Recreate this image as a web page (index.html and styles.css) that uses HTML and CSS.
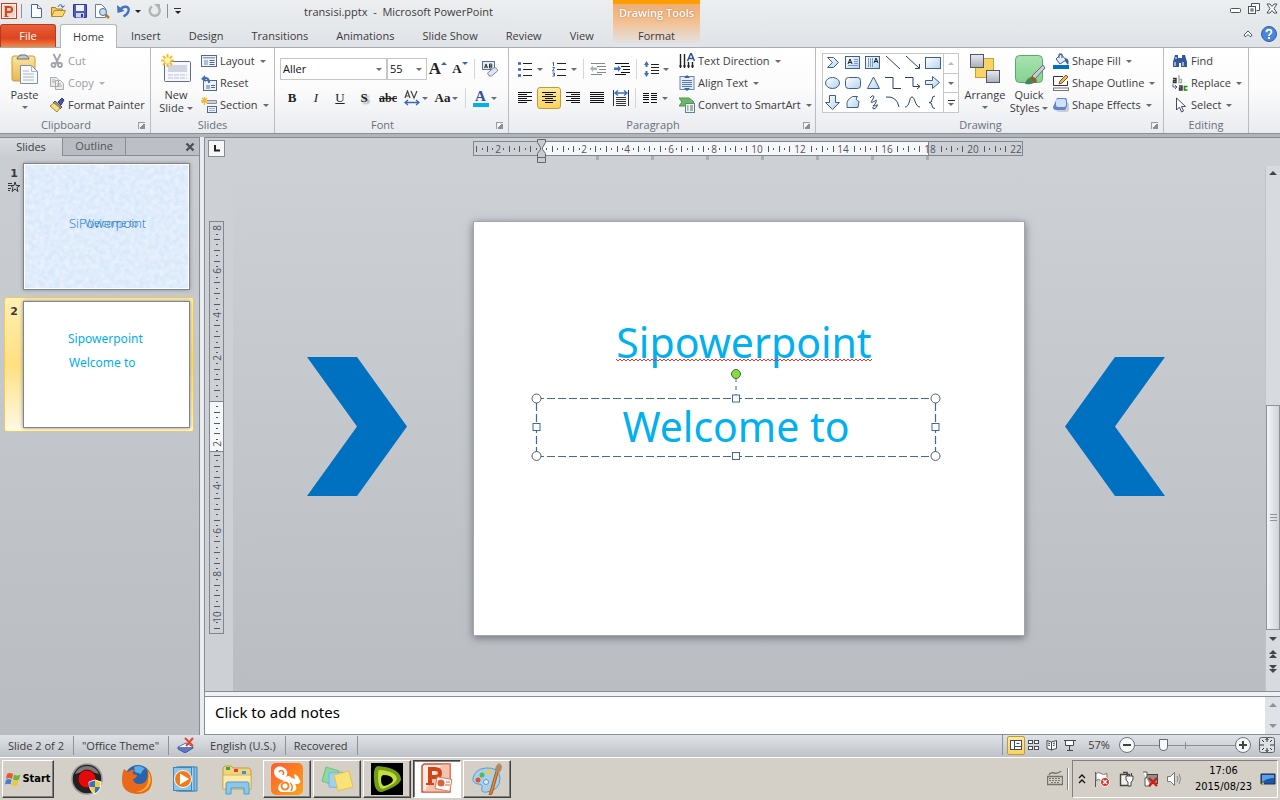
FILE: index.html
```html
<!DOCTYPE html>
<html lang="en">
  <head>
    <meta charset="UTF-8" />
    <meta name="viewport" content="width=device-width, initial-scale=1.0" />
    <title>transisi.pptx - Microsoft PowerPoint</title>
    <link rel="stylesheet" href="styles.css">
  </head>
  <body>
    <svg width="0" height="0" class="defs" aria-hidden="true">
      <defs>
        <linearGradient id="gBlue" x1="0" y1="0" x2="1" y2="1"><stop offset="0" stop-color="#fff" /><stop offset="1" stop-color="#b5d3ee" /></linearGradient>
        <linearGradient id="gGrey" x1="0" y1="0" x2="0" y2="1"><stop offset="0" stop-color="#e9ebef" /><stop offset="1" stop-color="#a9aeb8" /></linearGradient>
        <linearGradient id="gGold" x1="0" y1="0" x2="0" y2="1"><stop offset="0" stop-color="#fbe6a0" /><stop offset="1" stop-color="#e9b64e" /></linearGradient>
        <linearGradient id="gGreen" x1="0" y1="0" x2="0" y2="1"><stop offset="0" stop-color="#a9e3b0" /><stop offset="1" stop-color="#84d193" /></linearGradient>
        <linearGradient id="gOrange" x1="0" y1="0" x2="1" y2="1"><stop offset="0" stop-color="#ff5a2a" /><stop offset="1" stop-color="#ffa31a" /></linearGradient>
      </defs>
    </svg>

    <header class="header">
      <div class="header-left">
        <div class="title-row">
          <div class="qat">
            <svg class="app-icon" width="16" height="16" viewBox="0 0 16 16"><rect x="0.5" y="0.5" width="15" height="15" fill="#fdf3ee" stroke="#c4401c" /><rect x="2" y="2" width="12" height="12" fill="#f6d3c4" /><path d="M5 13V4h3.500a2.500 2.500 0 0 1 0 5H5" fill="none" stroke="#d14a1e" stroke-width="2.200" /><path d="M3.500 13.500h4M3.500 3.500h2" stroke="#d14a1e" /></svg>
            <span class="qat-sep"></span>
            <button aria-label="New"><svg width="16" height="16" viewBox="0 0 16 16"><path d="M3.500 1.500h6l4 4v9h-10z" fill="#fff" stroke="#4a6a96" /><path d="M9.500 1.500v4h4" fill="#dfe9f5" stroke="#4a6a96" /></svg></button>
            <button aria-label="Open"><svg width="16" height="16" viewBox="0 0 16 16"><path d="M1.500 13.500v-9h4l1 1.500h6v3" fill="#f3c963" stroke="#a97c22" /><path d="M1.500 13.500l3-6h11l-3 6z" fill="#fbd674" stroke="#b98a2a" /><path d="M8 4c1-3 4-3 5 0m-2-1l2 1.500 1.500-2" fill="none" stroke="#3d6bb5" /></svg></button>
            <button aria-label="Save"><svg width="16" height="16" viewBox="0 0 16 16"><path d="M1.500 1.500h13v13h-12l-1-1z" fill="#5159c0" stroke="#3338a0" /><rect x="4" y="2" width="8" height="6" fill="#eef2fb" /><rect x="4" y="10" width="8" height="4.500" fill="#cdd6e8" /><rect x="9" y="11" width="2" height="3" fill="#3338a0" /></svg></button>
            <button aria-label="Print Preview"><svg width="16" height="16" viewBox="0 0 16 16"><path d="M1.500 1.500h6l4 4v9h-10z" fill="#fff" stroke="#6a7d9a" /><circle cx="9" cy="9" r="3.500" fill="#bfe0f5" stroke="#4a6a96" /><path d="M11.500 11.500l3.500 3.500" stroke="#b9782c" stroke-width="2.500" /></svg></button>
            <button class="split" aria-label="Undo"><svg width="16" height="16" viewBox="0 0 16 16"><path d="M4 7c3-5 10-4 8.500 1-.5 2-2 4-5 5.500" fill="none" stroke="#4273c4" stroke-width="2.400" /><path d="M1 2l.5 8 7-2z" fill="#4273c4" /></svg><i class="caret dark"></i></button>
            <button aria-label="Repeat"><svg width="16" height="16" viewBox="0 0 16 16"><path d="M5 3.500a5 5 0 1 0 6.500 1" fill="none" stroke="#b0b3b8" stroke-width="2.400" /><path d="M7 1h6v6z" fill="#b0b3b8" /></svg></button>
            <span class="qat-sep"></span>
            <button class="customize" aria-label="Customize"><i class="bar"></i><i class="caret dark"></i></button>
          </div>
          <h1 class="doc-title">transisi.pptx&nbsp; -&nbsp; Microsoft PowerPoint</h1>
        </div>
        <nav class="tabs">
          <button class="tab file">File</button>
          <button class="tab active">Home</button>
          <button class="tab">Insert</button>
          <button class="tab">Design</button>
          <button class="tab">Transitions</button>
          <button class="tab">Animations</button>
          <button class="tab">Slide Show</button>
          <button class="tab">Review</button>
          <button class="tab">View</button>
        </nav>
      </div>
      <div class="context-tab">
        <span class="context-title">Drawing Tools</span>
        <button class="tab">Format</button>
      </div>
      <div class="header-right">
        <div class="win-controls">
          <button aria-label="Minimize"><svg width="12" height="12" viewBox="0 0 12 12"><rect x="0.5" y="5.500" width="10" height="4" rx="1" fill="#fff" stroke="#4d5260" /></svg></button>
          <button aria-label="Restore"><svg width="12" height="12" viewBox="0 0 12 12"><path d="M3.500 3.500v-3h8v7h-3" fill="#fff" stroke="#4d5260" /><rect x="0.500" y="3.500" width="7" height="7" fill="#fff" stroke="#4d5260" /><rect x="3" y="6" width="2" height="2" fill="none" stroke="#4d5260" /></svg></button>
          <button aria-label="Close"><svg width="12" height="12" viewBox="0 0 12 12"><path d="M1 1h3l2 2.500L8 1h3L8 5.500 11 10H8L6 7.500 4 10H1l3-4.500z" fill="#fff" stroke="#4d5260" /></svg></button>
        </div>
        <div class="help-row">
          <button aria-label="Minimize the Ribbon"><svg width="10" height="8" viewBox="0 0 10 8"><path d="M1 5l4-4 4 4-1 1.500H7L5 4.500 3 6.500H2z" fill="#fff" stroke="#4d5260" /></svg></button>
          <button aria-label="Help"><svg width="16" height="16" viewBox="0 0 16 16"><circle cx="8" cy="8" r="7.500" fill="#4a86d8" stroke="#2c5fae" /><path d="M5.500 6.200c0-3.400 5-3.200 5-.3 0 1.900-2.500 2-2.500 4" fill="none" stroke="#fff" stroke-width="1.800" /><rect x="7" y="11" width="2" height="2" fill="#fff" /></svg></button>
        </div>
      </div>
    </header>

    <section class="ribbon">
      <div class="group g-clipboard">
        <div class="group-body">
          <button class="big">
            <svg width="28" height="32" viewBox="0 0 28 32"><rect x="1" y="3" width="23" height="25" rx="2" fill="url(#gGold)" stroke="#cf9a3c" /><path d="M6 6c0-3 3-2 3-4h6c0 2 3 1 3 4z" fill="#c3c7ce" stroke="#696e78" /><path d="M9.500 12.500h11l6 6v12h-17z" fill="#f7f9fc" stroke="#7c8da8" /><path d="M20.500 12.500v6h6M12 18h6M12 21h11M12 24h11M12 27h11" fill="none" stroke="#a9b6ca" /></svg>
            <span>Paste</span><i class="caret"></i>
          </button>
          <div class="small-col">
            <button class="small off"><svg width="16" height="16" viewBox="0 0 16 16"><path d="M4.500 1l5 10M11.500 1l-5 10" stroke="#9fa3a9" stroke-width="1.800" fill="none" /><circle cx="4.500" cy="12" r="2" fill="none" stroke="#9fa3a9" stroke-width="1.800" /><circle cx="11" cy="12" r="2" fill="none" stroke="#9fa3a9" stroke-width="1.800" /></svg>Cut</button>
            <button class="small off"><svg width="16" height="16" viewBox="0 0 16 16"><path d="M1.500 2.500h6l2 2v7h-8zM6.500 5.500h5l3 3v6h-8z" fill="#eceded" stroke="#a9acb0" /><path d="M8 9h4M8 11h5M3 5h3M3 7h3" stroke="#a9acb0" /></svg>Copy<i class="caret"></i></button>
            <button class="small"><svg width="16" height="16" viewBox="0 0 16 16"><path d="M9 5l4-4 2 2-3 5z" fill="#4a55a8" stroke="#30397e" /><path d="M6 4l7 6-2 2-7-6z" fill="#8b8f98" stroke="#53565e" /><path d="M5 6l6 5-3 4-7-6z" fill="#f6dd85" stroke="#a88b34" /></svg>Format Painter</button>
          </div>
        </div>
        <div class="group-name">Clipboard<i class="launcher"></i></div>
      </div>

      <div class="group g-slides">
        <div class="group-body">
          <button class="big">
            <svg width="32" height="32" viewBox="0 0 32 32"><rect x="4.500" y="8.500" width="26" height="20" rx="1" fill="#f6f8fc" stroke="#5d6f8e" /><rect x="8" y="12" width="19" height="7" fill="#cfd5e2" /><path d="M8 22h19M8 25h19" stroke="#b9c0d0" stroke-dasharray="5 1" /><path d="M7.500 1v13M1 7.500h13M3 3l9 9M12 3l-9 9" stroke="#f4bd2a" stroke-width="2" /><circle cx="7.500" cy="7.500" r="3" fill="#fff3ae" /></svg>
            <span>New<br>Slide <i class="caret"></i></span>
          </button>
          <div class="small-col">
            <button class="small"><svg width="16" height="16" viewBox="0 0 16 16"><rect x="0.5" y="2.500" width="15" height="11" fill="#eef2fa" stroke="#56688a" /><rect x="2" y="4" width="12" height="1.500" fill="#8fa3c7" /><rect x="3" y="7" width="4" height="5" fill="#b2bfd8" /><path d="M8.500 7.500h5M8.500 9.500h5M8.500 11.500h5" stroke="#56688a" /></svg>Layout<i class="caret"></i></button>
            <button class="small"><svg width="16" height="16" viewBox="0 0 16 16"><rect x="2.500" y="5.500" width="13" height="10" fill="#eef2fa" stroke="#56688a" /><rect x="5" y="10" width="4" height="4" fill="#9fb0d0" /><path d="M10 10.500h4M10 12.500h4" stroke="#56688a" /><path d="M2 4c3-2 6-1 6 4" fill="none" stroke="#3c6fc4" stroke-width="2" /><path d="M0 4l4-4 1 7z" fill="#3c6fc4" /></svg>Reset</button>
            <button class="small"><svg width="16" height="16" viewBox="0 0 16 16"><path d="M3.500 0v8M0 4h8M1 1l5 5M6 1L1 6" stroke="#f0b92c" stroke-width="1.300" /><path d="M6 3.500h9.500v3H6" fill="#cdd1d8" stroke="#8b919c" /><rect x="6.500" y="9.500" width="9" height="6" fill="#eef2fa" stroke="#56688a" /><path d="M8 11.500h6M8 13.500h6" stroke="#9fb0d0" /></svg>Section<i class="caret"></i></button>
          </div>
        </div>
        <div class="group-name">Slides</div>
      </div>

      <div class="group g-font">
        <div class="rows">
          <div class="row">
            <label class="combo font-name"><select aria-label="Font"><option>Aller</option></select><i class="caret"></i></label>
            <label class="combo font-size"><select aria-label="Font Size"><option>55</option></select><i class="caret"></i></label>
            <button class="tool fit-font" aria-label="Grow Font"><b class="serif lg">A</b><i class="tri up"></i></button>
            <button class="tool fit-font" aria-label="Shrink Font"><b class="serif sm">A</b><i class="tri down"></i></button>
            <span class="sep"></span>
            <button class="tool" aria-label="Clear Formatting"><svg width="18" height="18" viewBox="0 0 18 18"><rect x="1.500" y="1.500" width="12" height="8" fill="#e5ebf6" stroke="#5a6f98" /><path d="M3.500 8l1.500-4 1.500 4M4 7h2M8.500 4v4h1.500a1 1 0 0 0 0-2h-1.500 1.500a1 1 0 0 0 0-2z" fill="none" stroke="#333" /><path d="M6.500 13l6-5q4-1 4 3l-6 5q-3 1-4-3z" fill="#dfe5f2" stroke="#7187b2" /></svg></button>
          </div>
          <div class="row">
            <button class="tool serif"><b>B</b></button>
            <button class="tool serif"><em>I</em></button>
            <button class="tool serif"><u>U</u></button>
            <button class="tool serif shadow"><b>S</b></button>
            <button class="tool serif strike"><s>abc</s></button>
            <button class="tool split spacing" aria-label="Character Spacing"><svg width="16" height="16" viewBox="0 0 16 16"><path d="M1 8l2.500-7L6 8M2 6h3M7 1l3 7 3-7" fill="none" stroke="#444" stroke-width="1.200" /><path d="M1 12.500h14M4 10l-3 2.500L4 15M12 10l3 2.500-3 2.500" fill="none" stroke="#3a68b8" stroke-width="1.300" /></svg><i class="caret"></i></button>
            <button class="tool split serif case"><b>Aa</b><i class="caret"></i></button>
            <span class="sep"></span>
            <button class="tool split serif color"><b>A</b><i class="caret"></i></button>
          </div>
        </div>
        <div class="group-name">Font<i class="launcher"></i></div>
      </div>

      <div class="group g-paragraph">
        <div class="group-body">
          <div class="rows">
            <div class="row">
              <button class="tool split" aria-label="Bullets"><svg width="16" height="16" viewBox="0 0 16 16"><path d="M6 2.500h9M6 8.500h9M6 14.500h9" stroke="#222" /><path d="M1 2.500h3M1 8.500h3M1 14.500h3" stroke="#3a62b0" stroke-width="2.600" /></svg><i class="caret"></i></button>
              <button class="tool split" aria-label="Numbering"><svg width="16" height="16" viewBox="0 0 16 16"><path d="M6 2.500h9M6 8.500h9M6 14.500h9" stroke="#222" /><path d="M2.500 1v4M1.500 2h1M1.500 6.500h2L1.500 10h2M1.500 12h2v1.500h-1 1V15h-2" fill="none" stroke="#3a62b0" /></svg><i class="caret"></i></button>
              <span class="sep"></span>
              <button class="tool" aria-label="Decrease List Level"><svg width="16" height="16" viewBox="0 0 16 16"><path d="M1 2.500h14M7 5.500h9M9 8.500h7M7 11.500h9M1 13.500h11" stroke="#888" /><path d="M0 7.500l3-3v2h4v2.500H3v2z" fill="#a8b0bb" /></svg></button>
              <button class="tool" aria-label="Increase List Level"><svg width="16" height="16" viewBox="0 0 16 16"><path d="M1 2.500h14M7 5.500h9M9 8.500h7M7 11.500h9M1 13.500h11" stroke="#111" /><path d="M7 7.500L4 4.500v2H0v2.500h4v2z" fill="#3b6fc6" /></svg></button>
              <span class="sep"></span>
              <button class="tool split" aria-label="Line Spacing"><svg width="16" height="16" viewBox="0 0 16 16"><path d="M8 3.500h8M8 6.500h8M8 9.500h8M8 12.500h8" stroke="#222" /><path d="M3.500 0L6 4H4.500v2h-2V4H1zM3.500 16L6 12H4.500v-2h-2v2H1z" fill="#3a6ec4" /></svg><i class="caret"></i></button>
            </div>
            <div class="row">
              <button class="tool" aria-label="Align Left"><svg width="16" height="16" viewBox="0 0 16 16"><path d="M1 2.500h14M1 4.500h9M1 6.500h14M1 8.500h9M1 10.500h14M1 12.500h9" stroke="#111" /></svg></button>
              <button class="tool on" aria-label="Center"><svg width="16" height="16" viewBox="0 0 16 16"><path d="M1 2.500h14M4 4.500h8M1 6.500h14M4 8.500h8M1 10.500h14M4 12.500h8" stroke="#111" /></svg></button>
              <button class="tool" aria-label="Align Right"><svg width="16" height="16" viewBox="0 0 16 16"><path d="M1 2.500h14M6 4.500h9M1 6.500h14M6 8.500h9M1 10.500h14M6 12.500h9" stroke="#111" /></svg></button>
              <button class="tool" aria-label="Justify"><svg width="16" height="16" viewBox="0 0 16 16"><path d="M1 2.500h14M1 4.500h14M1 6.500h14M1 8.500h14M1 10.500h14M1 12.500h14" stroke="#111" /></svg></button>
              <button class="tool" aria-label="Distribute"><svg width="16" height="16" viewBox="0 0 16 16"><path d="M.5 0v16M15.500 0v16M3 7.500h10M3 9.500h10M3 11.500h10M3 13.500h10M3 15.500h10" stroke="#333" /><path d="M2 3h12M5 .5L2 3l3 2.500M11 .5L14 3l-3 2.500" fill="none" stroke="#3a6ec4" stroke-width="1.400" /></svg></button>
              <span class="sep"></span>
              <button class="tool split" aria-label="Columns"><svg width="16" height="16" viewBox="0 0 16 16"><path d="M1 3.500h6M9 3.500h6M1 5.500h6M9 5.500h6M1 7.500h6M9 7.500h6M1 9.500h6M9 9.500h6M1 12.500h6M9 12.500h6" stroke="#111" /></svg><i class="caret"></i></button>
            </div>
          </div>
          <div class="small-col">
            <button class="small"><svg width="16" height="16" viewBox="0 0 16 16"><path d="M1.500 1v14M5.500 1v14M9.500 9v6M13.500 9v6" stroke="#222" stroke-width="1.400" /><path d="M0 13h3M4 13h3M8 13h3M12 13h3" stroke="#222" /><path d="M8.500 8L12 0l3.500 8M9.500 5.500h5" fill="none" stroke="#33508f" stroke-width="1.500" /></svg>Text Direction<i class="caret"></i></button>
            <button class="small"><svg width="16" height="16" viewBox="0 0 16 16"><rect x="1" y="1.500" width="14" height="13" fill="#e8effa" stroke="#6f84ae" /><path d="M3 5.500h10M3 7.500h10M3 9.500h10M3 11.500h10" stroke="#5377b5" /><path d="M8 0l3 3H5zM8 16l3-3H5z" fill="#2f62bd" /></svg>Align Text<i class="caret"></i></button>
            <button class="small"><svg width="16" height="16" viewBox="0 0 16 16"><path d="M0 1h10l5 4-3 4H0l3-4z" fill="#6fb668" stroke="#4a9648" /><rect x="6.500" y="6.500" width="9" height="9" fill="#eef4f6" stroke="#64809a" /><path d="M8 9h1.500M8 11h1.500M8 13h1.500M11 9h3M11 11h3M11 13h3" stroke="#4f7a5c" /></svg>Convert to SmartArt<i class="caret"></i></button>
          </div>
        </div>
        <div class="group-name">Paragraph<i class="launcher"></i></div>
      </div>

      <div class="group g-drawing">
        <div class="group-body">
          <div class="gallery">
            <svg width="120" height="58" viewBox="0 1 120 58" fill="none" stroke="#3f5e8c">
              <path d="M4.500 4.500h6l5 5-5 5h-6l5-5z" fill="url(#gBlue)" />
              <rect x="22.500" y="3.500" width="14" height="12" fill="url(#gBlue)" /><path d="M25 11l2-5 2 5M25.500 9.500h3" stroke="#222" /><path d="M31 6.500h4M31 8.500h4M31 10.500h4M25 12.500h10" stroke="#7d9cc8" />
              <rect x="42.500" y="3.500" width="14" height="12" fill="url(#gBlue)" /><path d="M45.500 5v9M47.500 5v9M49.500 5v9" stroke="#7d9cc8" /><path d="M51 10l2-5 2 5M51.500 8.500h3" stroke="#222" />
              <path d="M63 3l14 13" stroke="#27416f" />
              <path d="M83 3l13 12M96.500 11v4.500H92" stroke="#27416f" />
              <rect x="102.500" y="4.500" width="15" height="11" fill="url(#gBlue)" />
              <ellipse cx="9.500" cy="30" rx="7" ry="5.500" fill="url(#gBlue)" />
              <rect x="22.500" y="24.500" width="15" height="11" rx="3" fill="url(#gBlue)" />
              <path d="M50.500 24l6 11.500h-12z" fill="url(#gBlue)" />
              <path d="M62 24.500h8v11h8M82 24.500h8v9h7M94 31l3 2.500-3 2.500" stroke="#27416f" />
              <path d="M102.500 27.500h7v-4l7 6-7 6v-4h-7z" fill="url(#gBlue)" />
              <path d="M6.500 42.500h6v7h4l-7 7-7-7h4z" fill="url(#gBlue)" />
              <path d="M25.500 46.500l4-3h5q-3 3 1.500 5l-1 6h-11v-5z" fill="url(#gBlue)" />
              <path d="M47 45c3-4 5-2 3 1s-3 4 0 3 4-4 3 0-5 4-2 4 4-3 3 0-5 4-4 1" stroke="#27416f" />
              <path d="M63 44q11-1 13 10" stroke="#27416f" />
              <path d="M82 54c5 0 4-10 7-10s3 10 8 10" stroke="#27416f" />
              <path d="M112 43q-3 0-3 3.500T106 49.500q3 0 3 3t3 3" stroke="#27416f" />
            </svg>
            <div class="gallery-nav">
              <button class="off" aria-label="Row up"><i class="caret up"></i></button>
              <button aria-label="Row down"><i class="caret"></i></button>
              <button aria-label="More"><i class="bar"></i><i class="caret"></i></button>
            </div>
          </div>
          <button class="big">
            <svg width="32" height="32" viewBox="0 0 32 32"><rect x="6.500" y="5.500" width="18" height="19" fill="#f7d465" stroke="#c9a136" /><rect x="1.500" y="1.500" width="13" height="13" fill="url(#gGrey)" stroke="#4f5665" /><rect x="17.500" y="17.500" width="13" height="12" fill="url(#gGrey)" stroke="#4f5665" /></svg>
            <span>Arrange</span><i class="caret"></i>
          </button>
          <button class="big">
            <svg width="32" height="32" viewBox="0 0 32 32"><rect x="2.500" y="2.500" width="27" height="27" rx="4" fill="url(#gGreen)" stroke="#57ab66" /><path d="M30 12l2 3-10 11-3-3z" fill="#c9ccd1" stroke="#666b74" /><path d="M12 31q2-8 9-7l3 3q-2 5-12 4z" fill="#47865a" /><path d="M18 24l5 5" stroke="#9b5a2a" stroke-width="3" /></svg>
            <span>Quick<br>Styles <i class="caret"></i></span>
          </button>
          <div class="small-col">
            <button class="small"><svg width="16" height="16" viewBox="0 0 16 16"><path d="M3 6l5-5 5 6-6 4z" fill="#e4ebf5" stroke="#3f5e8c" /><path d="M12 5q5 1 3 7l-3-4z" fill="#2f62a8" /><path d="M6 5V1h3v4" fill="none" stroke="#3f5e8c" /><rect y="12" width="16" height="4" fill="#0070c0" /></svg>Shape Fill<i class="caret"></i></button>
            <button class="small"><svg width="16" height="16" viewBox="0 0 16 16"><path d="M10 1.500H.5v9h14V6" fill="#fff" stroke="#333" /><path d="M6 9l1-3 6-6 2 2-6 6z" fill="#efb75c" stroke="#85551f" /><rect x="0.500" y="13" width="15" height="2.500" fill="#fff" stroke="#777" /></svg>Shape Outline<i class="caret"></i></button>
            <button class="small"><svg width="16" height="16" viewBox="0 0 16 16"><rect x="3" y="5" width="13" height="10" rx="3" fill="#c8ccd3" /><path d="M4 1h8q2 0 2 2v6l-2 4H3q-3 0-3-3z" fill="#5f86c9" /><rect x="3" y="2" width="10" height="8" rx="2" fill="#cfe0f7" /></svg>Shape Effects<i class="caret"></i></button>
          </div>
        </div>
        <div class="group-name">Drawing<i class="launcher"></i></div>
      </div>

      <div class="group g-editing">
        <div class="group-body">
          <div class="small-col">
            <button class="small"><svg width="16" height="16" viewBox="0 0 16 16"><path d="M3 2h3v3h4V2h3l2 7v5H9v-4H7v4H1V9z" fill="#34569a" /><path d="M3 9v4M11 9v4M4 4v2" stroke="#b9cdf0" stroke-width="1.500" /></svg>Find</button>
            <button class="small"><svg width="16" height="16" viewBox="0 0 16 16"><path d="M1 3.500h3v4H1.500v-2H4" fill="none" stroke="#333" stroke-width="1.400" /><path d="M7 0v7.500h2.500v-3H7" fill="none" stroke="#aaa" stroke-width="1.400" /><path d="M1 9v3h3M3 10l2 2-2 2" fill="none" stroke="#3a62b0" /><path d="M7 11h3v4H7.500v-2H10" fill="none" stroke="#333" stroke-width="1.400" /><path d="M15.500 11.500h-3v3.500h3" fill="none" stroke="#1c8f1c" stroke-width="1.700" /></svg>Replace<i class="caret"></i></button>
            <button class="small"><svg width="16" height="16" viewBox="0 0 16 16"><path d="M4.500 1v12l3-3 2 5 2-1-2-4.500h4z" fill="#fff" stroke="#3f4d6b" /></svg>Select<i class="caret"></i></button>
          </div>
        </div>
        <div class="group-name">Editing</div>
      </div>
    </section>

    <main class="workspace">
      <aside class="panel">
        <div class="panel-tabs">
          <button class="panel-tab active">Slides</button>
          <button class="panel-tab">Outline</button>
          <button class="panel-close" aria-label="Close"><svg width="10" height="10" viewBox="0 0 10 10"><path d="M1.500 1.500l7 7M8.500 1.500l-7 7" stroke="#4c5057" stroke-width="2.400" /></svg></button>
        </div>
        <div class="slide-item">
          <div class="slide-no">1
            <svg width="12" height="12" viewBox="0 0 12 12"><path d="M7 1l1.200 3.500H12L9 6.500l1 4-3-2.500-3 2.500 1-4-2.500-2H6z" fill="none" stroke="#333" /><path d="M0 2.500h4M0 4.500h2M0 7.500h3M0 9.500h2" stroke="#333" /></svg>
          </div>
          <div class="thumb paper">
            <svg class="texture" width="100%" height="100%"><filter id="noise"><feTurbulence type="fractalNoise" baseFrequency="0.2" numOctaves="3" seed="4" /><feColorMatrix values="0 0 0 0 .92  0 0 0 0 .93  0 0 0 0 .99  0 1.200 0 0 -.3" /></filter><rect width="100%" height="100%" filter="url(#noise)" /></svg>
            <span class="thumb-title">SiPowerpoint</span>
            <span class="thumb-under">Welcome to</span>
          </div>
        </div>
        <div class="slide-item selected">
          <div class="slide-no">2</div>
          <div class="thumb">
            <span class="line1">Sipowerpoint</span>
            <span class="line2">Welcome to</span>
          </div>
        </div>
      </aside>

      <div class="editor">
        <div class="canvas">
          <div class="corner"><button aria-label="Tab stop"><svg width="9" height="9" viewBox="0 0 9 9"><path d="M3 1v5.500h5" fill="none" stroke="#222" stroke-width="2" /></svg></button></div>
          <div class="ruler-h"><svg id="rulerH" width="552" height="24" viewBox="0 0 552 24"></svg></div>
          <div class="ruler-v"><svg id="rulerV" width="15" height="415" viewBox="0 0 15 415"></svg></div>
          <div class="stage">
            <div class="slide">
              <svg class="arrow arrow-left" width="100" height="139" viewBox="0 0 100 139"><path d="M0 0h50l50 69.500L50 139H0l50-69.500z" fill="#0070c0" /></svg>
              <svg class="arrow arrow-right" width="100" height="139" viewBox="0 0 100 139"><path d="M100 0H50L0 69.500 50 139h50L50 69.500z" fill="#0070c0" /></svg>
              <div class="text-box first"><span class="misspelt">Sipowerpoint</span></div>
              <div class="text-box second">Welcome to
                <svg class="handles" width="412" height="94" viewBox="-6 -30 412 94">
                  <path d="M.5 5V58M399.500 5V58M0 .5h400M0 58.500h400" stroke="#41699c" stroke-width="1.200" stroke-dasharray="8 3" fill="none" />
                  <path d="M200-20V0" stroke="#41699c" stroke-dasharray="4 4" />
                  <circle cx="200" cy="-24" r="4.500" fill="#83e030" stroke="#555b66" />
                  <g fill="#fff" stroke="#555b6b"><circle cx=".5" cy=".5" r="4.500" /><circle cx="399.500" cy=".5" r="4.500" /><circle cx=".5" cy="58" r="4.500" /><circle cx="399.500" cy="58" r="4.500" /></g>
                  <g fill="#fff" stroke="#41699c"><rect x="196.500" y="-3" width="7" height="7" /><rect x="196.500" y="54.500" width="7" height="7" /><rect x="-3" y="25.500" width="7" height="7" /><rect x="396" y="25.500" width="7" height="7" /></g>
                </svg>
              </div>
            </div>
          </div>
          <div class="scrollbar">
            <button aria-label="Scroll up"><i class="arr up"></i></button>
            <div class="track"><div class="scroll-thumb"></div></div>
            <button aria-label="Scroll down"><i class="arr"></i></button>
            <button class="page" aria-label="Previous Slide"><i class="arr up"></i><i class="arr up"></i></button>
            <button class="page" aria-label="Next Slide"><i class="arr"></i><i class="arr"></i></button>
          </div>
        </div>
        <div class="notes">
          <p>Click to add notes</p>
          <div class="notes-scroll"><i class="arr up"></i><i class="arr"></i></div>
        </div>
      </div>
    </main>

    <footer class="status">
      <span class="cell">Slide 2 of 2</span>
      <span class="cell">"Office Theme"</span>
      <span class="cell spell"><svg width="18" height="16" viewBox="0 0 18 16"><path d="M1 10l8-4 7 4-8 5z" fill="#fff" stroke="#5069a8" /><path d="M1 10v2l7 4 8-5v-1" fill="#5f78c0" stroke="#4059a0" /><path d="M8 1l8 8M16 1l-7 8" stroke="#e8442c" stroke-width="2" /></svg>English (U.S.)</span>
      <span class="cell">Recovered</span>
      <div class="status-right">
        <button class="view on" aria-label="Normal"><svg width="12" height="11" viewBox="0 0 12 11"><rect x="0.500" y="0.500" width="11" height="9" fill="#fff" stroke="#444a55" /><path d="M4.500 0v10M5 6.500h7M6.500 3.500h3" stroke="#444a55" /></svg></button>
        <button class="view" aria-label="Slide Sorter"><svg width="12" height="11" viewBox="0 0 12 11" fill="#fff" stroke="#444a55"><rect x="0.500" y="0.500" width="4" height="3" /><rect x="6.500" y="0.500" width="4" height="3" /><rect x="0.500" y="6.500" width="4" height="3" /><rect x="6.500" y="6.500" width="4" height="3" /></svg></button>
        <button class="view" aria-label="Reading View"><svg width="12" height="11" viewBox="0 0 12 11" fill="#fff" stroke="#444a55"><path d="M5.500 2L1 .5v8L5.500 10 10.500 8.500v-8zV10M2 3l2 .5M2 5l2 .5M7 3.500L9 3M7 5.500L9 5" /></svg></button>
        <button class="view" aria-label="Slide Show"><svg width="12" height="11" viewBox="0 0 12 11" fill="#fff" stroke="#444a55"><path d="M0 .5h12M1.500 1v4.500h8V1M5.500 6v4M3 10.500h6" /></svg></button>
        <span class="percent">57%</span>
        <button class="round" aria-label="Zoom out"><svg width="16" height="16" viewBox="0 0 16 16"><circle cx="8" cy="8" r="7.500" fill="#f7f8fa" stroke="#6d727b" /><path d="M4 8h8" stroke="#444" stroke-width="2" /></svg></button>
        <input type="range" min="0" max="100" value="26" aria-label="Zoom" />
        <button class="round" aria-label="Zoom in"><svg width="16" height="16" viewBox="0 0 16 16"><circle cx="8" cy="8" r="7.500" fill="#f7f8fa" stroke="#6d727b" /><path d="M4 8h8M8 4v8" stroke="#444" stroke-width="2" /></svg></button>
        <button class="fit" aria-label="Fit slide"><svg width="16" height="16" viewBox="0 0 16 16"><rect x="0.500" y="0.500" width="15" height="15" rx="2" fill="#dfe1e5" stroke="#5d626c" /><path d="M8 1v4M8 11v4M1 8h4M11 8h4M6.500 3L8 1.500 9.500 3M6.500 13L8 14.500 9.500 13M3 3l2 2M13 3l-2 2M3 13l2-2M13 13l-2-2" fill="none" stroke="#333" /></svg></button>
      </div>
    </footer>

    <div class="taskbar">
      <button class="start"><svg width="16" height="16" viewBox="0 0 16 16"><path d="M2 3q3-2 6 0L7 8Q4 6 1 8z" fill="#e8572b" /><path d="M9 3.500q3 2 6.500 0L14 8.500q-3 2-6 0z" fill="#6fb53a" /><path d="M1 9q3-2 5.500 0L5.500 13.500Q3 12 0 13.500z" fill="#3b7fd6" /><path d="M7.500 9.500q3 2 6 0l-1 5q-3 1.500-6-.5z" fill="#f7c52e" /></svg>Start</button>
      <button class="task" aria-label="Recorder"><svg width="32" height="32" viewBox="0 0 32 32"><circle cx="16" cy="16" r="15" fill="#222" stroke="#999" stroke-width="1.500" /><path d="M4 11a13 13 0 0 1 24 0q-12-5-24 0z" fill="#777" /><circle cx="16" cy="16" r="9" fill="#e20a0a" stroke="#600" /><path d="M18 19l6-2 6 2q0 9-6 12-6-3-6-12z" fill="#f6ce34" stroke="#fff" /><path d="M24 17.500V24h-5.500q-.5-2 0-5zM24 24h5q-1 4-5 6z" fill="#2c73d2" /></svg></button>
      <button class="task" aria-label="Firefox"><svg width="32" height="32" viewBox="0 0 32 32"><circle cx="17" cy="15" r="13" fill="#2b62ad" /><path d="M13 4q7-3 11 2-3 1-4 5l-6-2z" fill="#58aee6" /><path d="M3 6l4 3q3-3 7-2-3 2-2 4l4 1q0 3-4 4 1 5 6 5 6 0 8-5 2-6-1-11 6 5 6 12 0 14-15 14Q1 30 1 17 1 10 3 6z" fill="#e8681c" /><path d="M27 8q5 8 1 15-5 7-13 6 10-2 12-10 1-5 0-11z" fill="#fbb829" /></svg></button>
      <button class="task" aria-label="Media Player"><svg width="32" height="32" viewBox="0 0 32 32"><path d="M8 4h18v24H8z" fill="#86bde2" stroke="#3f86b8" /><path d="M5 4h18v24H5z" fill="#a6d2ee" stroke="#3f86b8" /><rect x="2.500" y="4.500" width="18" height="23" fill="#8ec6e8" stroke="#3f86b8" /><circle cx="12" cy="16" r="8.500" fill="#f07a1c" stroke="#fff" /><path d="M9 10.500l9 5.500-9 5.500z" fill="#fff" /></svg></button>
      <button class="task" aria-label="Explorer"><svg width="32" height="32" viewBox="0 0 32 32"><path d="M2 26V5l2-2h6l2 2h16l2 2v19z" fill="#f0d37c" stroke="#c39c3c" /><rect x="5" y="4" width="4" height="3" fill="#2ea84a" /><rect x="13" y="6" width="4" height="3" fill="#d9422c" /><rect x="21" y="8" width="4" height="3" fill="#3b8fd8" /><path d="M2 12h28v14H2z" fill="#fae9a8" stroke="#d6b55c" /><path d="M5 31V21q0-2 2-2h19q2 0 2 2v10h-5v-6H10v6z" fill="#8cc7ea" stroke="#4e9cc9" /></svg></button>
      <button class="task open" aria-label="UC Browser"><svg width="32" height="32" viewBox="0 0 32 32"><rect width="32" height="32" rx="5" fill="url(#gOrange)" /><path d="M13 18C8 16 3 14 3 9c0-5 6-7 10-4 4 2 4 6 2 9 2-2 4-1 6 1l3 1-1-5c3 1 5 3 5 5 2 2 2 4-1 5h-3c3 4 1 8-4 8H10c-5-3-3-8 3-11z" fill="#fff" /><path d="M8 9c2-3 6-1 4 3" fill="none" stroke="#ff6a28" stroke-width="1.500" /><circle cx="14" cy="23" r="3.500" fill="none" stroke="#ff8020" stroke-width="2" /><path d="M19 20q4 3 1 8" fill="none" stroke="#ff8020" stroke-width="1.500" /></svg></button>
      <button class="task open" aria-label="Sticky Notes"><svg width="32" height="32" viewBox="0 0 32 32"><path d="M5 4l13 4-4 15L1 18z" fill="#8fd9a0" stroke="#6fc083" /><path d="M8 10l14-1 1 16-15-1z" fill="#a3cff2" stroke="#7ab3e0" /><path d="M13 12l15-4 4 16-15 4z" fill="#fae27a" stroke="#e2c14a" /></svg></button>
      <button class="task open" aria-label="Etisalat"><svg width="32" height="32" viewBox="0 0 32 32"><rect width="32" height="32" fill="#000" /><path d="M7 3q22 2 23 13 0 6-19 13Q2 30 3 10q0-6 4-7z" fill="#719e19" /><path d="M8 7q17 1 18 9-1 5-14 10-5 0-5-12 0-6 1-7z" fill="#c5dc3a" /><path d="M12 12q9 0 10 5-1 4-9 6-3-1-3-7 0-3 2-4z" fill="#000" /></svg></button>
      <button class="task pressed" aria-label="PowerPoint"><svg width="32" height="32" viewBox="0 0 32 32"><path d="M3 1h26v28H1V3z" fill="#fbeae3" stroke="#d35230" stroke-width="1.500" /><path d="M21 1h8v28H3z" fill="#f0a88c" opacity=".6" /><path d="M9 21V6h5q5 0 5 4t-5 4H9" fill="none" stroke="#cf4517" stroke-width="4" /><path d="M5 21h8" stroke="#cf4517" stroke-width="2" /><rect x="15" y="15" width="15" height="12" rx="1" fill="#fff" stroke="#e07a58" transform="rotate(10 22 21)" /><circle cx="20" cy="20" r="3.500" fill="#e0603c" /><path d="M25 19h4M24 22h5" stroke="#e0603c" /></svg></button>
      <button class="task open" aria-label="Paint"><svg width="32" height="32" viewBox="0 0 32 32"><path d="M15 5Q28 4 29 15q0 12-13 14-7 1-5-4 1-4-4-4-6-1-5-6Q4 6 15 5z" fill="#a8d0ec" stroke="#5d9bc7" /><circle cx="11" cy="12" r="2.500" fill="#58b848" /><circle cx="18" cy="9" r="2.500" fill="#f3cb3a" /><circle cx="7" cy="17" r="2.500" fill="#e05038" /><circle cx="15" cy="19" r="2.500" fill="#dbeefa" stroke="#5d9bc7" /><path d="M25 8l2 2-6 21-3 1z" fill="#e08a34" stroke="#a85d1c" /><path d="M24 9q-1-5 4-9 6 3 0 10z" fill="#b08a62" /></svg></button>
      <div class="tray">
        <svg class="keyboard" width="16" height="16" viewBox="0 0 16 16"><path d="M2 4q1-3 5-2t7-2M.5 5.500h15v8H.5z" fill="none" stroke="#76736c" stroke-width="1.300" /><path d="M2 7.500h12M2 9.500h12M4 11.500h8" stroke="#76736c" stroke-dasharray="2 1" /></svg>
        <span class="tray-sep"></span>
        <div class="tray-box">
          <button class="chevrons" aria-label="Show hidden icons"><svg width="8" height="10" viewBox="0 0 8 10"><path d="M1 4l3-3 3 3M1 9l3-3 3 3" fill="none" stroke="#111" stroke-width="1.300" /></svg></button>
          <svg width="16" height="16" viewBox="0 0 16 16"><path d="M1.500 1v15" stroke="#555" /><path d="M2 2.500q3-2 5 0t6 0v7q-3 2-6 0t-5 0z" fill="#fff" stroke="#777" /><circle cx="11" cy="11" r="4.500" fill="#dd2c20" stroke="#fff" /><path d="M9 9l4 4M13 9l-4 4" stroke="#fff" stroke-width="1.500" /></svg>
          <svg width="16" height="16" viewBox="0 0 16 16"><path d="M2.500 3.500h9v11h-9zM5 1.500h4v2" fill="#f2f1ee" stroke="#444" stroke-width="1.400" /><path d="M8 5h7v3q0 2-2 3v4h-3v-4q-2-1-2-3zM9.500 2v3M13.500 2v3" fill="#fff" stroke="#444" /></svg>
          <svg width="16" height="16" viewBox="0 0 16 16"><rect x="4.500" y="3.500" width="11" height="9" fill="#8d8d8a" stroke="#444" /><path d="M1 1h4v4q0 2-2 2v8h6" fill="#fff" stroke="#555" /><path d="M7 7l8 8M15 7l-8 8" stroke="#d8190f" stroke-width="2.400" /></svg>
          <svg width="16" height="16" viewBox="0 0 16 16"><path d="M1.500 5.500h3l4-4v13l-4-4h-3z" fill="#fff" stroke="#777" /><path d="M11 5q2 3 0 6M13 3q3 5 0 10" fill="none" stroke="#888" /></svg>
          <time class="clock">17:06<br>2015/08/23</time>
          <svg width="16" height="16" viewBox="0 0 16 16"><path d="M1 3h14v10H1z" fill="#1c56a8" stroke="#1b2f4c" /><path d="M2 4h12v3q-7 0-12 4z" fill="#5da0e6" /><path d="M1 13l3-2v3z" fill="#e8b52a" /></svg>
        </div>
      </div>
    </div>

    <script>
      const NS = "http://www.w3.org/2000/svg";
      const STEP = 5.4;

      function add(parent, name, attrs, text) {
        let el = document.createElementNS(NS, name);
        for (let key in attrs) el.setAttribute(key, attrs[key]);
        if (text !== undefined) el.textContent = text;
        parent.appendChild(el);
      }

      // a tick every quarter, the number itself every 2 cm
      function drawMarks(svg, length, zero, vertical) {
        let first = Math.ceil((2 - zero) / STEP);
        let last = Math.floor((length - 3 - zero) / STEP);
        for (let i = first; i <= last; i++) {
          let p = Math.round(zero + i * STEP);
          if (i === 0) continue;
          if (i % 8 === 0) {
            let n = Math.abs(i / 4);
            let attrs = vertical
              ? { x: 0, y: 0, transform: "translate(12 " + p + ") rotate(-90)" }
              : { x: p, y: 12 };
            add(svg, "text", attrs, n);
            continue;
          }
          let half = i % 2 === 0 ? 3 : 1;
          let box = vertical
            ? { x: 8 - half, y: p, width: half * 2, height: 1 }
            : { x: p, y: 8 - half, width: 1, height: half * 2 };
          // wide numbers leave no room for the ticks beside them
          let wide = !vertical && Math.abs(i) > 38 && (i % 8 === 1 || i % 8 === 7);
          if (!wide) add(svg, "rect", { ...box, class: "tick" });
        }
      }

      let h = document.getElementById("rulerH");
      add(h, "rect", { x: 0.5, y: 0.5, width: 549, height: 14, class: "outside" });
      add(h, "rect", { x: 68.5, y: 0.5, width: 387, height: 14, class: "inside" });
      drawMarks(h, 551, 68, false);
      for (let i = 0; i < 7; i++) {
        add(h, "rect", { x: 123 + i * 55, y: 15, width: 3, height: 4, class: "stop" });
      }
      add(h, "path", { d: "M64.500-1.500h8v3l-3 5v2l3 4v9h-8v-9l3-4v-2l-3-5zM64.500 16.500h8", class: "marker" });

      let v = document.getElementById("rulerV");
      add(v, "rect", { x: 0.5, y: 0.5, width: 14, height: 412, class: "outside" });
      add(v, "rect", { x: 0.5, y: 180.5, width: 14, height: 50, class: "inside" });
      drawMarks(v, 414, 180, true);
    </script>
  </body>
</html>
```
FILE: styles.css
```css
:root {
  --ui: "Open Sans", "Noto Sans", sans-serif;
  --tahoma: "DejaVu Sans Condensed", "DejaVu Sans", sans-serif;
  --slide-font: "Noto Sans", "Open Sans", sans-serif;
  --text: #3b3b3b;
  --line: #878d95;
  --light-line: #b9bdc3;
}

* {
  box-sizing: border-box;
}

body {
  margin: 0;
  height: 100vh;
  display: flex;
  flex-direction: column;
  overflow: hidden;
  font-family: var(--ui);
  font-size: 11px;
  line-height: 14px;
  color: var(--text);
  background-color: #c8ccd1;
}

button {
  font: inherit;
  color: inherit;
  padding: 0;
  border: 0;
  background: none;
  display: flex;
  flex: none;
  align-items: center;
  justify-content: center;
}

svg {
  display: block;
  flex: none;
}

.defs {
  position: absolute;
}

.caret {
  display: inline-block;
  flex: none;
  border: 3px solid transparent;
  border-top-color: #6a6a6a;
  border-bottom: 0;
}

.caret.up {
  border-top: 0;
  border-bottom: 3px solid #b5b8bc;
}

.caret.dark {
  border-top-color: #222;
}

.bar {
  width: 7px;
  height: 1px;
  background-color: #333;
}

/* title bar and tabs */
.header {
  display: flex;
  height: 48px;
  flex: none;
  background: linear-gradient(#eceef0, #dfe3e7);
  border-bottom: 1px solid #a7acb2;
}

.header-left {
  width: 613px;
}

.title-row {
  height: 24px;
  display: flex;
  align-items: center;
}

.qat {
  display: flex;
  align-items: center;
  gap: 6px;
  padding: 0 0 2px 1px;
  width: 184px;
}

.qat-sep {
  width: 1px;
  height: 14px;
  margin-left: -2px;
  background-color: #8d9299;
}

.qat .split {
  gap: 3px;
}

.customize {
  flex-direction: column;
  gap: 2px;
}

.doc-title {
  flex: 1;
  margin: 0;
  font-size: 11px;
  font-weight: normal;
  text-align: center;
}

.tabs {
  display: flex;
  height: 24px;
}

.tab {
  padding: 0 14px;
  height: 24px;
}

.tab.file {
  width: 56px;
  height: 23px;
  margin-right: 4px;
  color: #fff;
  border: 1px solid #b63a1c;
  border-bottom: 0;
  border-radius: 3px 3px 0 0;
  background: linear-gradient(#e8603a, #dd4420 60%, #f08a45);
}

.tab.active {
  width: 57px;
  border: 1px solid #b2b7bd;
  border-bottom: 0;
  border-radius: 3px 3px 0 0;
  background-color: #fff;
}

.context-tab {
  width: 87px;
  display: flex;
  flex-direction: column;
  border-top: 4px solid #ff9c00;
  background: linear-gradient(#efaf74, #f3bf90 40%, #e1e5e9 95%);
}

.context-tab .tab {
  padding-top: 1px;
}

.context-title {
  height: 20px;
  line-height: 18px;
  text-align: center;
  color: #fff;
  font-weight: 600;
  text-shadow: 0 0 2px #b5703c;
  white-space: nowrap;
}

.header-right {
  flex: 1;
}

.win-controls,
.help-row {
  height: 18px;
  display: flex;
  align-items: center;
  justify-content: flex-end;
  gap: 6px;
  padding-right: 2px;
}

.help-row {
  height: 32px;
  gap: 8px;
  padding-right: 3px;
}

/* ribbon */
.ribbon {
  height: 86px;
  flex: none;
  display: flex;
  background: linear-gradient(#fff, #fbfbfc 50%, #e9ebef);
  border-bottom: 1px solid #8b9097;
}

.group {
  flex: none;
  display: flex;
  flex-direction: column;
  border-right: 1px solid var(--light-line);
}

.g-clipboard { width: 151px; }
.g-slides { width: 124px; }
.g-font { width: 234px; }
.g-paragraph { width: 307px; }
.g-drawing { width: 348px; }
.g-editing { width: 85px; }

.group-body {
  flex: 1;
  display: flex;
}

.group-name {
  height: 16px;
  line-height: 15px;
  padding-right: 18px;
  text-align: center;
  color: #69707b;
  position: relative;
}

.g-slides .group-name,
.g-editing .group-name {
  padding-right: 0;
}

.launcher {
  position: absolute;
  right: 5px;
  bottom: 4px;
  width: 7px;
  height: 7px;
  border: solid #9a9fa6;
  border-width: 1px 0 0 1px;
}

.launcher::after {
  content: "";
  position: absolute;
  right: 0;
  bottom: 0;
  width: 4px;
  height: 4px;
  border: solid #8a8f96;
  border-width: 0 1px 1px 0;
  background: linear-gradient(to bottom right, #fff 40%, #8a8f96 40%);
}

.big {
  flex-direction: column;
  justify-content: flex-start;
  width: 44px;
  padding-top: 5px;
  line-height: 13px;
}

.big span {
  padding-top: 3px;
  white-space: nowrap;
}

.big > .caret {
  margin-top: 5px;
}

.big span .caret {
  vertical-align: 2px;
}

.g-clipboard .big {
  width: 49px;
}

.g-slides .big {
  width: 50px;
}

.small-col {
  display: flex;
  flex-direction: column;
  padding-top: 2px;
}

.small {
  height: 22px;
  justify-content: flex-start;
  gap: 3px;
  white-space: nowrap;
}

.small .caret {
  margin-left: 2px;
}

.off {
  color: #9b9b9b;
}

.off .caret {
  border-top-color: #b0b0b0;
}

.rows {
  flex: 1;
  display: flex;
  flex-direction: column;
  gap: 7px;
  padding: 10px 0 0 5px;
}

.row {
  display: flex;
  align-items: center;
  height: 22px;
}

.tool {
  width: 24px;
  height: 22px;
}

.tool.on {
  border: 1px solid #c29a3c;
  border-radius: 3px;
  background: linear-gradient(#fde9a0, #fbd35c);
}

.tool.split {
  width: 34px;
  gap: 4px;
}

.tool.fit-font {
  width: 22px;
}

.sep {
  width: 1px;
  height: 20px;
  flex: none;
  margin: 0 4px;
  background-color: #d3d6da;
}

.serif {
  font-family: "Liberation Serif", serif;
  font-size: 13px;
  color: #222;
}

.serif.lg {
  font-size: 17px;
}

.serif.sm {
  font-size: 13px;
}

.tri {
  align-self: flex-start;
  margin-top: 4px;
  border: 3px solid transparent;
  border-top: 0;
  border-bottom-color: #3a62b0;
}

.tri.down {
  border-top: 3px solid #3a62b0;
  border-bottom: 0;
}

.combo {
  display: flex;
  flex: none;
  align-items: center;
  position: relative;
  height: 22px;
  border: 1px solid #c3c7cc;
  background-color: #fff;
}

.combo select {
  appearance: none;
  width: 100%;
  height: 20px;
  padding: 0 2px;
  border: 0;
  background: none;
  font: inherit;
  color: #111;
}

.combo .caret {
  position: absolute;
  right: 4px;
}

.font-name {
  width: 107px;
}

.font-size {
  width: 40px;
}

.g-font .sep {
  margin: 0 3px;
}

.shadow b {
  text-shadow: 2px 2px 2px #888;
}

.g-font .split {
  gap: 2px;
  width: 31px;
}

.g-font .strike {
  font-size: 12px;
  font-weight: bold;
}

.serif.color {
  color: #34568f;
}

.color b {
  width: 16px;
  font-size: 15px;
  line-height: 13px;
  border-bottom: 4px solid #00b0f0;
}

.g-paragraph .rows {
  flex: none;
  width: 170px;
  padding-left: 4px;
}

.g-paragraph .rows .sep {
  margin: 0 2px;
}

.gallery {
  display: flex;
  flex: none;
  height: 60px;
  width: 137px;
  margin: 5px 4px 0 6px;
  border: 1px solid #c3c7cc;
  background-color: #fff;
}

.gallery-nav {
  flex: 1;
  display: flex;
  flex-direction: column;
  border-left: 1px solid #c3c7cc;
}

.gallery-nav button {
  flex: 1;
  flex-direction: column;
  gap: 2px;
}

.gallery-nav button + button {
  border-top: 1px solid #c3c7cc;
}

.gallery-nav .off .caret {
  border-top-color: transparent;
}

.gallery ~ .small-col {
  padding-left: 2px;
}

.g-editing .small-col {
  padding-left: 8px;
}

/* workspace */
.workspace {
  flex: 1;
  min-height: 0;
  display: flex;
  padding-top: 3px;
  background-color: #b2b6bb;
}

.panel {
  width: 200px;
  flex: none;
  border: solid var(--line);
  border-width: 1px 1px 0 0;
  background: linear-gradient(#cbcfd4, #b9bcc1);
}

.panel-tabs {
  display: flex;
  height: 18px;
}

.panel-tab {
  width: 63px;
  padding-bottom: 1px;
  border: solid var(--line);
  border-width: 0 1px 1px 0;
  background-color: #b9bdc3;
  color: #555;
}

.panel-tab.active {
  border-bottom: 0;
  background: linear-gradient(#d8dce1, #cbcfd4);
  color: var(--text);
}

.panel-close {
  flex: 1;
  justify-content: flex-end;
  padding-right: 4px;
  border-bottom: 1px solid var(--line);
  background-color: #bcc0c6;
}

.slide-item {
  display: flex;
  width: 190px;
  margin: 3px 0 2px 4px;
  padding: 3px;
  border: 1px solid transparent;
  border-radius: 3px;
}

.slide-item.selected {
  border-color: #f0cc57;
  background: linear-gradient(#fff0b5, #ffdf80 50%, #fffae6);
}

.slide-no {
  width: 15px;
  padding-top: 4px;
  padding-right: 3px;
  text-align: center;
  font-family: "DejaVu Sans", sans-serif;
  font-weight: bold;
  font-size: 11px;
}

.thumb {
  flex: 1;
  height: 127px;
  position: relative;
  border: 1px solid #7e848c;
  background-color: #fff;
  box-shadow: 0 0 4px #8b8f95;
  font-family: var(--slide-font);
  font-size: 12px;
  color: #00aeef;
}

.thumb.paper {
  background-color: #d6e8fa;
  box-shadow: inset 0 0 0 1px #fff, 0 0 4px #8b8f95;
}

.texture {
  position: absolute;
  inset: 0;
  padding: 1px;
}

.thumb span {
  position: absolute;
  white-space: nowrap;
}

.thumb-title,
.thumb .thumb-under {
  left: 45px;
  top: 52px;
  font-family: "Open Sans", sans-serif;
  font-size: 13px;
  font-weight: 300;
  color: #1878cc;
}

.thumb .thumb-under {
  left: 61px;
  font-size: 10px;
}

.line1 {
  left: 44px;
  top: 30px;
}

.line2 {
  left: 45px;
  top: 54px;
}

.editor {
  flex: 1;
  min-width: 0;
  display: flex;
  flex-direction: column;
  margin-left: 4px;
  box-shadow: -4px 0 0 #e9edf2;
  border-left: 1px solid var(--line);
}

.canvas {
  flex: 1;
  min-height: 0;
  display: grid;
  grid-template-columns: 28px 1fr 15px;
  grid-template-rows: 28px 1fr;
  border: solid var(--line);
  border-width: 1px 0;
  background-color: #cdd1d6;
}

.corner {
  padding: 2px 0 0 3px;
}

.corner button {
  width: 17px;
  height: 17px;
  border: 1px solid var(--line);
  background-color: #f7f7f7;
}

.ruler-h {
  grid-column: 2;
  display: flex;
  justify-content: center;
  padding-top: 3px;
}

.ruler-v {
  grid-row: 2;
  grid-column: 1;
  display: flex;
  align-items: center;
  padding-left: 4px;
}

.ruler-h svg,
.ruler-v svg {
  overflow: visible;
  font-size: 10px;
}

.ruler-h text,
.ruler-v text {
  fill: #50555f;
  text-anchor: middle;
}

.outside {
  fill: #cdd1d6;
  stroke: #80868e;
}

.inside {
  fill: #f6f7f8;
  stroke: #80868e;
}

.tick {
  fill: #555a62;
}

.stop {
  fill: #abadb0;
}

.marker {
  fill: #c9cbce;
  stroke: #63666b;
}

.stage {
  grid-row: 2;
  grid-column: 2;
  display: flex;
  align-items: center;
  justify-content: center;
  overflow: hidden;
  background: linear-gradient(#cdd0d5, #babdc2);
}

.slide {
  position: relative;
  flex: none;
  width: 552px;
  height: 415px;
  border: 1px solid #a3a7ac;
  background-color: #fff;
  box-shadow: 0 2px 8px #70757d;
  font-family: var(--slide-font);
  color: #00b0f0;
}

.arrow {
  position: absolute;
  top: 135px;
}

.arrow-left {
  left: -167px;
}

.arrow-right {
  left: 591px;
}

.text-box {
  position: absolute;
  width: 400px;
  height: 58px;
  font-size: 41px;
  line-height: 56px;
  text-align: center;
}

.text-box.first {
  left: 70px;
  top: 92px;
}

.text-box.second {
  left: 62px;
  top: 176px;
}

.misspelt {
  position: relative;
}

/* zigzag: the upper half of a row of small crosses */
.misspelt::after {
  content: "";
  position: absolute;
  left: 0;
  right: 0;
  bottom: 9px;
  height: 2px;
  background:
    linear-gradient(45deg, transparent 38%, #f03030 38% 62%, transparent 62%) 0 0 / 4px 4px,
    linear-gradient(-45deg, transparent 38%, #f03030 38% 62%, transparent 62%) 0 0 / 4px 4px;
}

.handles {
  position: absolute;
  left: -6px;
  top: -30px;
}

.scrollbar {
  grid-row: 2;
  grid-column: 3;
  display: flex;
  flex-direction: column;
  background-color: #d7dade;
  border-left: 1px solid #c0c4c9;
}

.scrollbar button {
  flex-direction: column;
  height: 14px;
}

.arr {
  border: 4px solid transparent;
  border-top-color: #444;
  border-bottom: 0;
}

.arr.up {
  border-top: 0;
  border-bottom: 4px solid #444;
}

.track {
  flex: 1;
  display: flex;
  flex-direction: column;
  justify-content: flex-end;
  padding-bottom: 2px;
}

.scroll-thumb {
  height: 50%;
  border: 1px solid #8d939b;
  background:
    repeating-linear-gradient(#8d939b 0 1px, transparent 1px 3px) center / 7px 8px no-repeat,
    linear-gradient(to right, #f4f5f7, #cfd3d8);
}

.scrollbar .page {
  height: 15px;
}

.scrollbar .page:last-child {
  margin-bottom: 15px;
}

.notes {
  height: 39px;
  flex: none;
  display: flex;
  margin-top: 4px;
  box-shadow: 0 -4px 0 #eff2f5;
  border: solid var(--line);
  border-width: 1px 0;
  background-color: #fff;
}

.notes p {
  flex: 1;
  margin: 0;
  padding: 5px 10px;
  font-family: "Noto Sans", sans-serif;
  font-size: 15px;
  line-height: 20px;
  color: #000;
}

.notes-scroll {
  width: 15px;
  display: flex;
  flex-direction: column;
  align-items: center;
  justify-content: space-between;
  padding: 6px 0;
  background-color: #dfe3e8;
}

.notes-scroll .arr {
  border-top-color: #8b9499;
}

.notes-scroll .arr.up {
  border-bottom-color: #8b9499;
}

/* status bar */
.status {
  height: 22px;
  flex: none;
  display: flex;
  align-items: center;
  padding-bottom: 2px;
  background: linear-gradient(#dfe2e6, #bfc3c9);
}

.cell {
  height: 19px;
  line-height: 19px;
  padding: 0 9px 0 8px;
  border-right: 1px solid #8e939a;
  white-space: nowrap;
}

.spell {
  display: flex;
  align-items: center;
  gap: 15px;
}

.status-right {
  margin-left: auto;
  display: flex;
  align-items: center;
  height: 20px;
  padding: 0 5px 0 4px;
  border-left: 1px solid #8e939a;
}

.view {
  width: 18px;
  height: 19px;
}

.view.on {
  border: 1px solid #c29a3c;
  border-radius: 2px;
  background: linear-gradient(#fde9a0, #fbd35c);
}

.percent {
  width: 30px;
  margin: 0 5px;
  text-align: center;
}

input[type="range"] {
  appearance: none;
  width: 100px;
  height: 16px;
  margin: 0;
  background:
    linear-gradient(#8a8f96, #8a8f96) center / 1px 7px no-repeat,
    linear-gradient(#8a8f96, #8a8f96) center / 100% 1px no-repeat;
}

input[type="range"]::-webkit-slider-thumb {
  appearance: none;
  width: 9px;
  height: 12px;
  border: 1px solid #666b74;
  border-radius: 1px 1px 5px 5px;
  background-color: #f7f8fa;
}

.fit {
  margin-left: 8px;
}

/* taskbar */
.taskbar {
  height: 43px;
  flex: none;
  display: flex;
  align-items: center;
  gap: 2px;
  padding: 0 2px;
  border-top: 1px solid #fff;
  background-color: #d4d0c8;
  font-family: var(--tahoma);
  color: #000;
}

.start {
  width: 52px;
  height: 38px;
  gap: 1px;
  margin-right: 7px;
  border: 1px solid;
  border-color: #fff #404040 #404040 #fff;
  box-shadow: inset -1px -1px 0 #808080;
  font-weight: bold;
}

.task {
  width: 48px;
  height: 38px;
}

.task.open {
  border: 1px solid;
  border-color: #fff #404040 #404040 #fff;
  box-shadow: inset -1px -1px 0 #808080;
}

.task.pressed {
  border: 1px solid;
  border-color: #404040 #fff #fff #404040;
  box-shadow: inset 1px 1px 0 #808080;
  background-color: #fff;
}

.tray {
  margin-left: auto;
  display: flex;
  align-items: center;
}

.tray-sep {
  width: 2px;
  height: 22px;
  margin: 0 3px 0 4px;
  border-left: 1px solid #808080;
  border-right: 1px solid #fff;
}

.tray-box {
  height: 38px;
  display: flex;
  align-items: center;
  gap: 8px;
  padding: 0 1px 0 5px;
  border: 1px solid;
  border-color: #808080 #fff #fff #808080;
}

.clock {
  padding: 0 0 0 5px;
  text-align: center;
  line-height: 16px;
}
```
